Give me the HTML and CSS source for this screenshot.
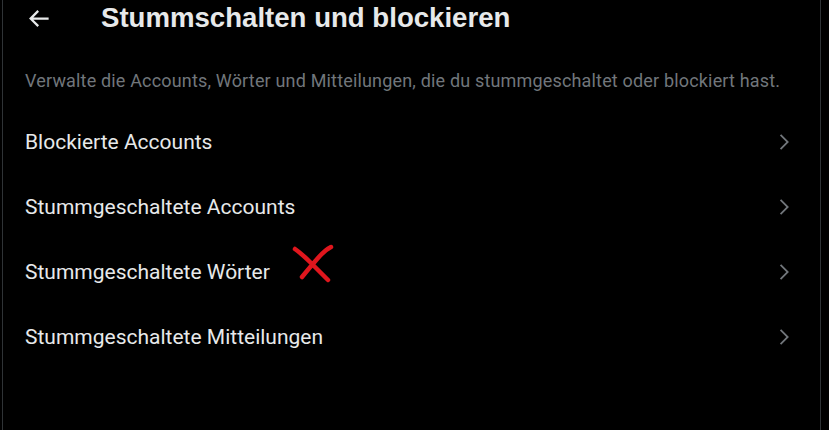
FILE: index.html
```html
<!DOCTYPE html>
<html lang="de">
<head>
<meta charset="utf-8">
<link rel="stylesheet" href="styles.css">
</head>
<body>
<div class="panel">
  <header class="head">
    <span class="back">
      <svg viewBox="0 0 24 24" width="27" height="27"><path d="M7.414 13l5.043 5.04-1.414 1.42L3.586 12l7.457-7.46 1.414 1.42L7.414 11H21v2H7.414z" fill="#e7e9ea"/></svg>
    </span>
    <h1 class="title">Stummschalten und blockieren</h1>
  </header>
  <p class="desc">Verwalte die Accounts, Wörter und Mitteilungen, die du stummgeschaltet oder blockiert hast.</p>
  <ul class="list">
    <li class="row"><span>Blockierte Accounts</span><svg class="chev" viewBox="0 0 24 24"><path d="M14.586 12L7.543 4.96l1.414-1.42L17.414 12l-8.457 8.46-1.414-1.420L14.586 12z"/></svg></li>
    <li class="row"><span>Stummgeschaltete Accounts</span><svg class="chev" viewBox="0 0 24 24"><path d="M14.586 12L7.543 4.96l1.414-1.42L17.414 12l-8.457 8.46-1.414-1.42L14.586 12z"/></svg></li>
    <li class="row"><span>Stummgeschaltete Wörter</span><svg class="mark" viewBox="0 0 42 40"><path d="M3 5 Q10 10 18 18 T36 36 M39 3 Q33 6 26 14 T10 33" fill="none" stroke="#e0161d" stroke-width="4.5" stroke-linecap="round"/></svg><svg class="chev" viewBox="0 0 24 24"><path d="M14.586 12L7.543 4.96l1.414-1.42L17.414 12l-8.457 8.46-1.414-1.42L14.586 12z"/></svg></li>
    <li class="row"><span>Stummgeschaltete Mitteilungen</span><svg class="chev" viewBox="0 0 24 24"><path d="M14.586 12L7.543 4.96l1.414-1.42L17.414 12l-8.457 8.46-1.414-1.42L14.586 12z"/></svg></li>
  </ul>
</div>
</body>
</html>
```
FILE: styles.css
```css
html, body {
  margin: 0;
  background: #000;
  height: 100%;
}
body {
  font-family: Roboto, "Liberation Sans", sans-serif;
  color: #e7e9ea;
}
.panel {
  margin-left: 2px;
  width: 817px;
  min-height: 100%;
  border-left: 1px solid #2f3336;
  border-right: 1px solid #2f3336;
  box-sizing: content-box;
}
.head {
  display: flex;
  align-items: center;
  height: 36px;
  padding-left: 22px;
}
.back {
  display: flex;
  width: 27px;
  height: 27px;
  margin-right: 49px;
}
.title {
  margin: 0;
  font-family: "Liberation Sans", Arial, sans-serif;
  font-size: 27.6px;
  font-weight: 700;
}
.desc {
  margin: 0;
  padding: 34px 22px 0 22px;
  font-size: 18px;
  letter-spacing: 0.17px;
  color: #71767b;
  line-height: 22px;
}
.list {
  list-style: none;
  margin: 0;
  padding: 17px 0 0 0;
}
.row {
  position: relative;
  display: flex;
  align-items: center;
  justify-content: space-between;
  height: 65px;
  padding: 0 25px 0 22px;
  font-size: 21px;
}
.mark {
  position: absolute;
  left: 289px;
  top: 5px;
  width: 42px;
  height: 40px;
}
.chev {
  width: 22px;
  height: 22px;
  fill: #71767b;
}
```
